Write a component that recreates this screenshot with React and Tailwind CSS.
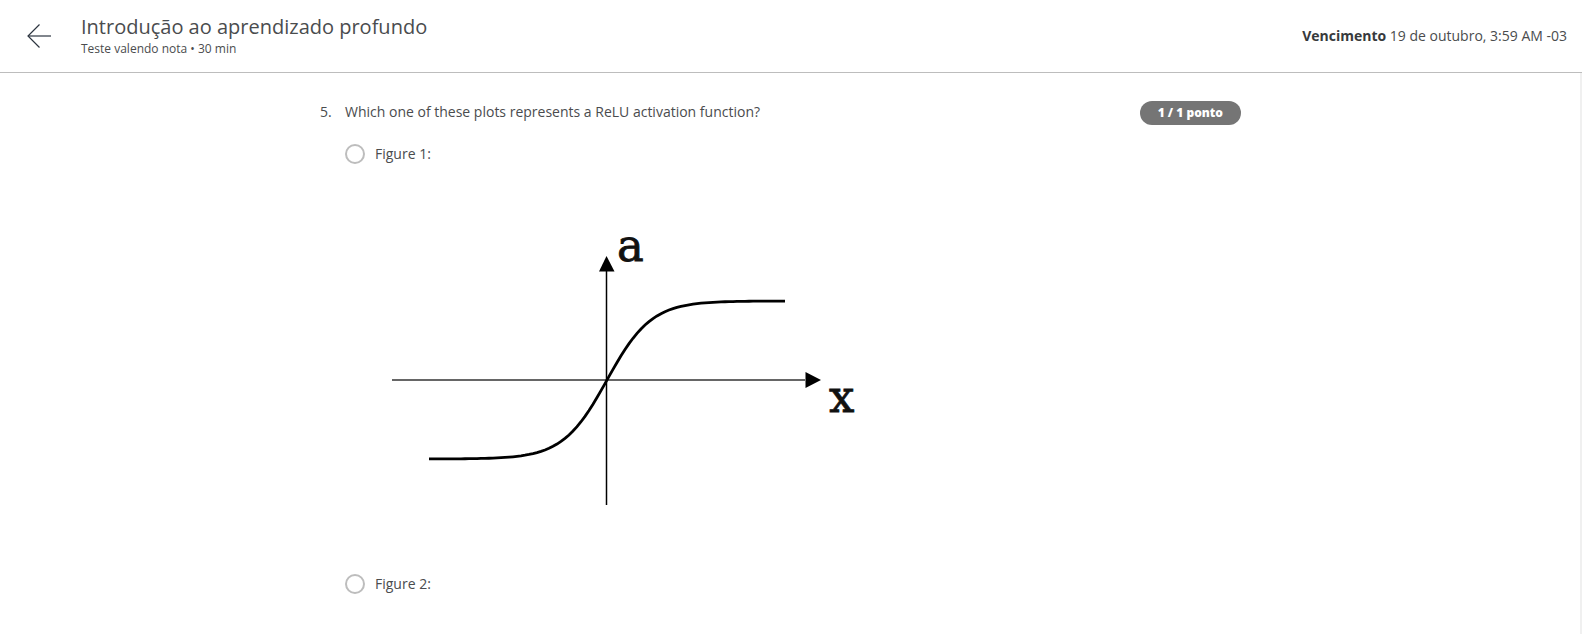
const ORIGIN = { x: 232, y: 180 };
const AMPLITUDE = 79;
const STEEPNESS = 0.0226;

const curve = Array.from({ length: 90 }, (_, i) => {
  const dx = -178 + i * 4;
  const y = ORIGIN.y - AMPLITUDE * Math.tanh(dx * STEEPNESS);
  return `${ORIGIN.x + dx},${y.toFixed(2)}`;
}).join(" ");

function TanhPlot() {
  return (
    <svg width="480" height="320" viewBox="0 0 480 320" role="img" aria-label="Figure 1" className="max-w-full">
      <path d="M17 180H430" stroke="#666" strokeWidth="2" />
      <path d="M231.5 68V305" stroke="#000" strokeWidth="1.5" />
      <path d="M231.5 56L239.5 71.5H224Z" fill="#000" />
      <path d="M446 180L430.5 172V188Z" fill="#000" />
      <polyline points={curve} fill="none" stroke="#000" strokeWidth="2.8" />
      <text x="242" y="61" fontSize="45" fill="#111" stroke="#111" strokeWidth="0.8" fontFamily="'DejaVu Serif', serif">a</text>
      <text x="454" y="212" fontSize="45" fill="#111" stroke="#111" strokeWidth="0.8" fontFamily="'DejaVu Serif', serif">x</text>
    </svg>
  );
}

function Option({ id, label, children }) {
  return (
    <div>
      <div className="flex items-center gap-[10px]">
        <input
          id={id}
          type="radio"
          name="question-5"
          className="size-5 shrink-0 appearance-none rounded-full border-2 border-[#bdbdbd] bg-white checked:border-[6px] checked:border-[#2a73cc]"
        />
        <label htmlFor={id} className="leading-5">{label}</label>
      </div>
      {children}
    </div>
  );
}

export default function App() {
  return (
    <div className="flex min-h-screen flex-col bg-white font-['Open_Sans',sans-serif] text-sm text-[#4a4c4e]">
      <header className="flex items-center border-b border-[#bdbdbd] pr-[15px] pl-6">
        <button type="button" aria-label="Voltar" className="flex h-[72px] items-center">
          <svg width="30" height="30" viewBox="0 0 30 30" fill="none" stroke="#2d3540">
            <path d="M15.5 3.5L4 15L15.5 26.5" strokeWidth="1.2" />
            <path d="M4 15H27" strokeWidth="1.2" />
          </svg>
        </button>
        <div className="ml-[27px] flex-1 pt-0.5">
          <h1 className="text-xl leading-6">Introdução ao aprendizado profundo</h1>
          <p className="text-xs leading-5">Teste valendo nota • 30 min</p>
        </div>
        <p>
          <strong className="font-bold text-[#373a3c]">Vencimento</strong> 19 de outubro, 3:59 AM -03
        </p>
      </header>
      <main className="flex-1 border-r-2 border-[#f0f0f0]">
        <div className="mx-auto flex max-w-[940px] items-start pt-7 pr-[19px]">
          <span className="w-[25px] shrink-0 leading-[22px]">5.</span>
          <fieldset className="min-w-0 flex-1">
            <legend className="leading-[22px]">Which one of these plots represents a ReLU activation function?</legend>
            <div className="flex flex-col gap-[54px] pt-[21px]">
              <Option id="figure-1" label="Figure 1:">
                <div className="pt-9 pl-[30px]">
                  <TanhPlot />
                </div>
              </Option>
              <Option id="figure-2" label="Figure 2:" />
            </div>
          </fieldset>
          <span className="rounded-full bg-[#757575] px-[18px] text-xs leading-6 font-extrabold text-white">1 / 1 ponto</span>
        </div>
      </main>
    </div>
  );
}
